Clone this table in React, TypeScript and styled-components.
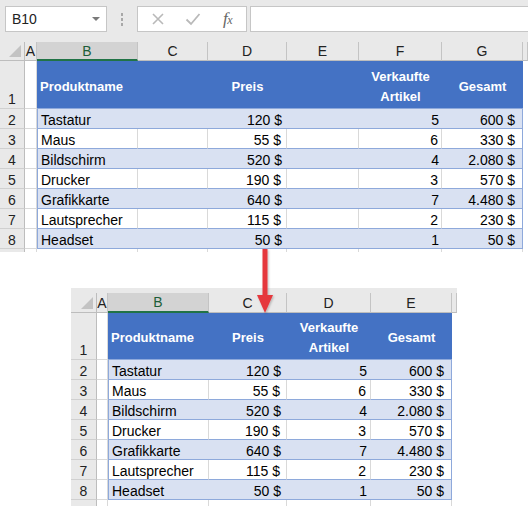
import React from 'react';
import styled, { createGlobalStyle, css } from 'styled-components';

const Global = createGlobalStyle`
  html, body { margin: 0; padding: 0; background: #fff; }
  body { font-family: "Liberation Sans", Arial, sans-serif; }
`;

const Page = styled.div`
  position: relative;
  width: 528px;
  height: 506px;
  overflow: hidden;
  background: #fff;
`;

/* ---------- formula toolbar ---------- */
const Toolbar = styled.div`
  display: flex;
  align-items: flex-start;
  height: 42px;
  box-sizing: border-box;
  padding: 6px 0 0 5px;
  background: #e9e9e9;
`;

const NameBox = styled.div`
  width: 102px;
  height: 26px;
  box-sizing: border-box;
  border: 1px solid #c6c6c6;
  background: #fff;
  display: flex;
  align-items: center;
  justify-content: space-between;
  padding: 0 6px 0 6px;
  font-size: 14px;
  color: #222;
`;

const Caret = styled.span`
  width: 0;
  height: 0;
  border-left: 4px solid transparent;
  border-right: 4px solid transparent;
  border-top: 4px solid #7a7a7a;
`;

const Grip = styled.div`
  width: 30px;
  height: 26px;
  display: flex;
  flex-direction: column;
  align-items: center;
  justify-content: center;
  gap: 2px;
`;

const GripDot = styled.span`
  width: 2px;
  height: 3px;
  background: #a8a8a8;
`;

const FxGroup = styled.div`
  width: 110px;
  height: 26px;
  box-sizing: border-box;
  border: 1px solid #c6c6c6;
  background: #fff;
  display: flex;
  align-items: center;
  padding-left: 2px;
`;

const FxSlot = styled.div`
  width: 35px;
  height: 24px;
  display: flex;
  align-items: center;
  justify-content: center;
`;

const FxLabel = styled.span`
  font-family: "Liberation Serif", "Times New Roman", serif;
  font-style: italic;
  font-size: 17px;
  color: #666;
  letter-spacing: -0.5px;
  small {
    font-size: 12px;
  }
`;

const FormulaBar = styled.div`
  flex: 1;
  height: 26px;
  margin-left: 3px;
  margin-right: -3px;
  box-sizing: border-box;
  border: 1px solid #c6c6c6;
  background: #fff;
`;

/* ---------- sheet grid ---------- */
const Sheet = styled.div<{ $cols: string; $rows: string }>`
  display: grid;
  grid-template-columns: ${(p) => p.$cols};
  grid-template-rows: ${(p) => p.$rows};
  font-size: 14px;
  color: #000;
`;

const LowerWrap = styled.div`
  margin: 36px 0 0 71px;
  width: 386px;
`;

const TopStrip = styled.div`
  height: 5px;
  background: #e9e9e9;
`;

type Kind =
  | 'corner'
  | 'col'
  | 'row'
  | 'blank'
  | 'head'
  | 'band'
  | 'plain'
  | 'stub'
  | 'rowStub'
  | 'none';

const GRID = '#d9d9d9';
const TBL = '#8ea9db';

const kinds: Record<Kind, ReturnType<typeof css>> = {
  corner: css`
    background: #e9e9e9;
    border-right: 1px solid #bdbdbd;
    border-bottom: 1px solid #bdbdbd;
  `,
  col: css`
    background: #e9e9e9;
    border-right: 1px solid #c4c4c4;
    border-bottom: 1px solid #bdbdbd;
    justify-content: center;
    color: #222;
    font-size: 14px;
  `,
  row: css`
    background: #e9e9e9;
    border-right: 1px solid #bdbdbd;
    border-bottom: 1px solid #d0d0d0;
    justify-content: center;
    color: #222;
    font-size: 14px;
    padding-top: 2px;
  `,
  blank: css`
    background: #fff;
    border-right: 1px solid ${GRID};
    border-bottom: 1px solid ${GRID};
  `,
  head: css`
    background: #4472c4;
    color: #fff;
    font-weight: bold;
    font-size: 13px;
    line-height: 20px;
    padding-top: 4px;
    border-bottom: 1px solid ${TBL};
  `,
  band: css`
    background: #d9e1f2;
    border-bottom: 1px solid ${TBL};
    padding-top: 2px;
  `,
  plain: css`
    background: #fff;
    border-right: 1px solid ${GRID};
    border-bottom: 1px solid ${TBL};
    padding-top: 2px;
  `,
  stub: css`
    background: #fff;
    border-right: 1px solid ${GRID};
  `,
  rowStub: css`
    background: #e9e9e9;
    border-right: 1px solid #bdbdbd;
  `,
  none: css`
    background: #fff;
  `,
};

const Cell = styled.div<{
  $kind: Kind;
  $align?: 'left' | 'right' | 'center';
  $pr?: number;
  $sel?: boolean;
  $bottom?: boolean;
  $edgeL?: boolean;
  $edgeR?: boolean;
}>`
  box-sizing: border-box;
  display: flex;
  align-items: ${(p) => (p.$bottom ? 'flex-end' : 'center')};
  overflow: hidden;
  white-space: nowrap;
  position: relative;
  ${(p) => kinds[p.$kind]}
  ${(p) =>
    p.$align === 'left' &&
    css`
      justify-content: flex-start;
      padding-left: 3px;
    `}
  ${(p) =>
    p.$align === 'right' &&
    css`
      justify-content: flex-end;
      padding-right: ${p.$pr ?? 4}px;
    `}
  ${(p) =>
    p.$align === 'center' &&
    css`
      justify-content: center;
      text-align: center;
    `}
  ${(p) =>
    p.$sel &&
    css`
      background: #d3d3d3;
      border-bottom: 2px solid #217346;
      color: #1d5e38;
    `}
  ${(p) =>
    p.$bottom &&
    css`
      padding-bottom: 1px;
    `}
  ${(p) =>
    p.$edgeL &&
    css`
      border-left: 1px solid ${TBL};
    `}
  ${(p) =>
    p.$edgeR &&
    css`
      border-right: 1px solid ${TBL};
    `}
`;

const CornerMark = styled.span`
  position: absolute;
  right: 3px;
  bottom: 3px;
  width: 0;
  height: 0;
  border-left: 12px solid transparent;
  border-bottom: 12px solid #c3c3c3;
`;

const Arrow = styled.svg`
  position: absolute;
  left: 255px;
  top: 249px;
  overflow: visible;
`;

/* ---------- data ---------- */
const rows = [
  ['Tastatur', '120 $', '5', '600 $'],
  ['Maus', '55 $', '6', '330 $'],
  ['Bildschirm', '520 $', '4', '2.080 $'],
  ['Drucker', '190 $', '3', '570 $'],
  ['Grafikkarte', '640 $', '7', '4.480 $'],
  ['Lautsprecher', '115 $', '2', '230 $'],
  ['Headset', '50 $', '1', '50 $'],
];

const XIcon = () => (
  <svg width="14" height="14" viewBox="0 0 14 14">
    <path d="M2 2 L12 12 M12 2 L2 12" stroke="#b9b9b9" strokeWidth="1.6" fill="none" />
  </svg>
);

const CheckIcon = () => (
  <svg width="16" height="14" viewBox="0 0 16 14">
    <path d="M1.5 7.5 L6 12 L14.5 2" stroke="#b9b9b9" strokeWidth="1.8" fill="none" />
  </svg>
);

function TopSheet() {
  const letters = ['A', 'B', 'C', 'D', 'E', 'F', 'G'];
  return (
    <Sheet
      $cols="25px 12px 101px 70px 79px 72px 83px 81px 1fr"
      $rows="19px 48px repeat(7, 20px) 3px"
    >
      <Cell $kind="corner">
        <CornerMark />
      </Cell>
      {letters.map((l) => (
        <Cell key={l} $kind="col" $sel={l === 'B'}>
          {l}
        </Cell>
      ))}
      <Cell $kind="col" />

      <Cell $kind="row" $bottom>
        1
      </Cell>
      <Cell $kind="blank" />
      <Cell $kind="head" $align="left">
        Produktname
      </Cell>
      <Cell $kind="head" />
      <Cell $kind="head" $align="center">
        Preis
      </Cell>
      <Cell $kind="head" />
      <Cell $kind="head" $align="center">
        Verkaufte
        <br />
        Artikel
      </Cell>
      <Cell $kind="head" $align="center">
        Gesamt
      </Cell>
      <Cell $kind="none" />

      {rows.map((r, i) => {
        const k: Kind = i % 2 === 0 ? 'band' : 'plain';
        return (
          <React.Fragment key={r[0]}>
            <Cell $kind="row">{i + 2}</Cell>
            <Cell $kind="blank" />
            <Cell $kind={k} $align="left" $edgeL>
              {r[0]}
            </Cell>
            <Cell $kind={k} />
            <Cell $kind={k} $align="right" $pr={5}>
              {r[1]}
            </Cell>
            <Cell $kind={k} />
            <Cell $kind={k} $align="right" $pr={3}>
              {r[2]}
            </Cell>
            <Cell $kind={k} $align="right" $pr={7} $edgeR>
              {r[3]}
            </Cell>
            <Cell $kind="none" />
          </React.Fragment>
        );
      })}

      <Cell $kind="rowStub" />
      {letters.map((l) => (
        <Cell key={'s' + l} $kind="stub" />
      ))}
      <Cell $kind="none" />
    </Sheet>
  );
}

function BottomSheet() {
  const letters = ['A', 'B', 'C', 'D', 'E'];
  return (
    <LowerWrap>
      <TopStrip />
      <Sheet $cols="26px 11px 101px 78px 84px 81px 1fr" $rows="20px 47px repeat(7, 20px) 6px">
        <Cell $kind="corner">
          <CornerMark />
        </Cell>
        {letters.map((l) => (
          <Cell key={l} $kind="col" $sel={l === 'B'}>
            {l}
          </Cell>
        ))}
        <Cell $kind="col" />

        <Cell $kind="row" $bottom>
          1
        </Cell>
        <Cell $kind="blank" />
        <Cell $kind="head" $align="left">
          Produktname
        </Cell>
        <Cell $kind="head" $align="center">
          Preis
        </Cell>
        <Cell $kind="head" $align="center">
          Verkaufte
          <br />
          Artikel
        </Cell>
        <Cell $kind="head" $align="center">
          Gesamt
        </Cell>
        <Cell $kind="none" />

        {rows.map((r, i) => {
          const k: Kind = i % 2 === 0 ? 'band' : 'plain';
          return (
            <React.Fragment key={r[0]}>
              <Cell $kind="row">{i + 2}</Cell>
              <Cell $kind="blank" />
              <Cell $kind={k} $align="left" $edgeL>
                {r[0]}
              </Cell>
              <Cell $kind={k} $align="right" $pr={6}>
                {r[1]}
              </Cell>
              <Cell $kind={k} $align="right" $pr={4}>
                {r[2]}
              </Cell>
              <Cell $kind={k} $align="right" $pr={7} $edgeR>
                {r[3]}
              </Cell>
              <Cell $kind="none" />
            </React.Fragment>
          );
        })}

        <Cell $kind="rowStub" />
        {letters.map((l) => (
          <Cell key={'s' + l} $kind="stub" />
        ))}
        <Cell $kind="none" />
      </Sheet>
    </LowerWrap>
  );
}

export default function App() {
  return (
    <Page>
      <Global />
      <Toolbar>
        <NameBox>
          B10
          <Caret />
        </NameBox>
        <Grip>
          <GripDot />
          <GripDot />
          <GripDot />
        </Grip>
        <FxGroup>
          <FxSlot>
            <XIcon />
          </FxSlot>
          <FxSlot>
            <CheckIcon />
          </FxSlot>
          <FxSlot>
            <FxLabel>
              f<small>x</small>
            </FxLabel>
          </FxSlot>
        </FxGroup>
        <FormulaBar />
      </Toolbar>
      <TopSheet />
      <BottomSheet />
      <Arrow width="20" height="66" viewBox="0 0 20 66">
        <defs>
          <filter id="sh" x="-50%" y="-20%" width="200%" height="140%">
            <feDropShadow dx="1" dy="1" stdDeviation="1" floodColor="#000" floodOpacity="0.25" />
          </filter>
        </defs>
        <g filter="url(#sh)" fill="#e5393e">
          <rect x="7.5" y="0" width="5" height="47" />
          <polygon points="2,46 18,46 10,64" />
        </g>
      </Arrow>
    </Page>
  );
}
